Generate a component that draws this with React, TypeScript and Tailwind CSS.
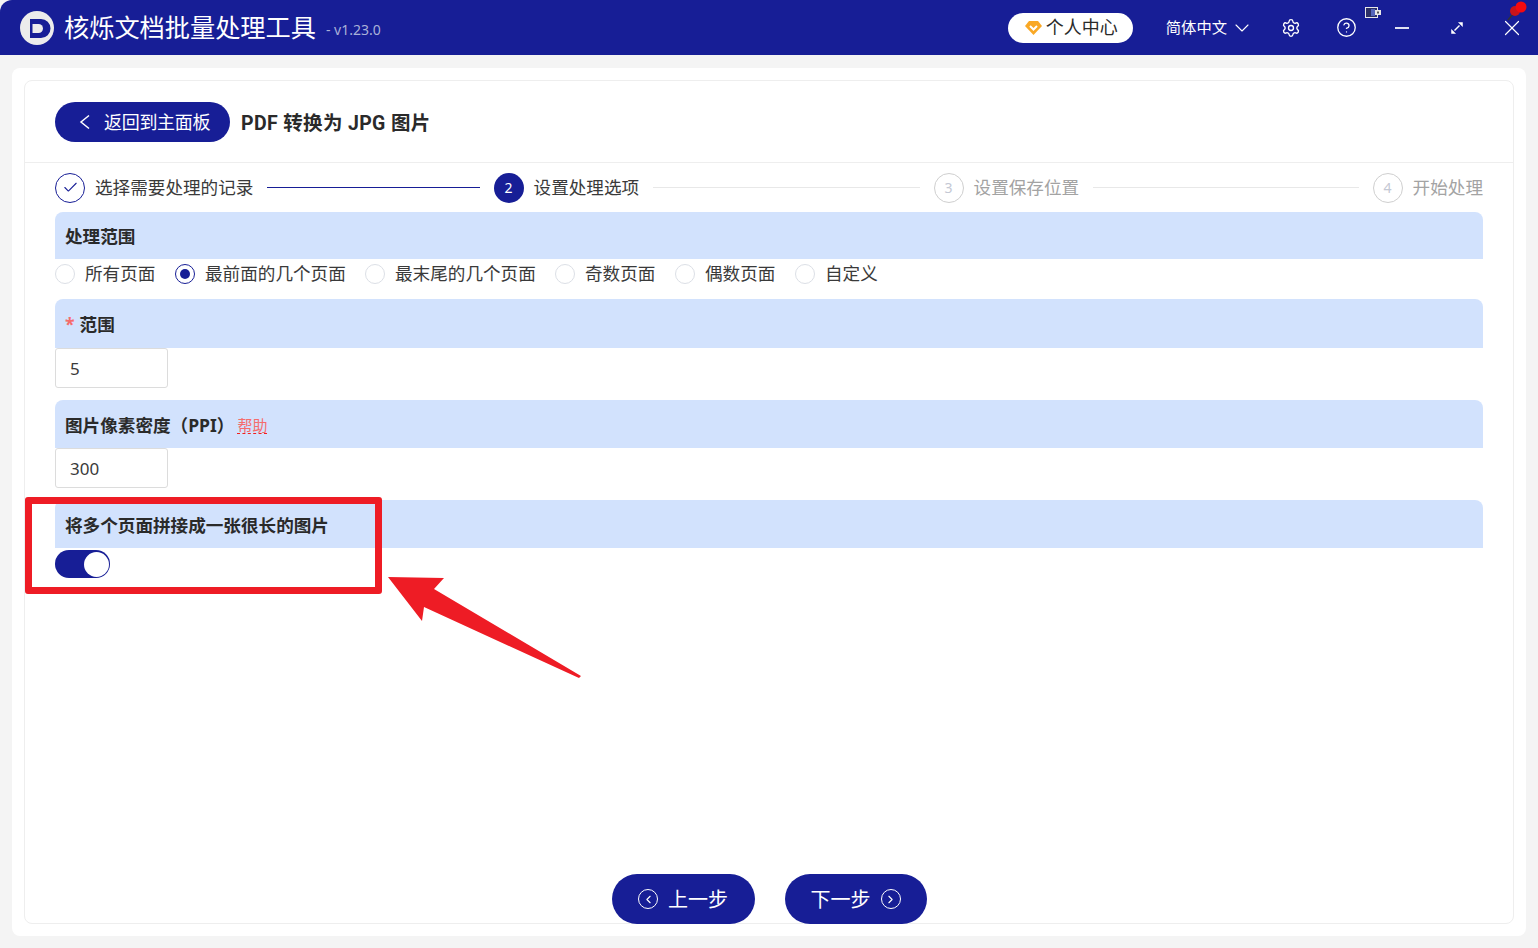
import { Check, ChevronDown, ChevronLeft, ChevronRight, CircleHelp, Settings, X } from "lucide-react";

const font = "font-['Noto_Sans','Noto_Sans_CJK_SC',sans-serif]";

function SectionHeader({ children, h }: { children: React.ReactNode; h: string }) {
  return (
    <div className={`${h} flex items-center rounded-t-lg bg-[#d2e2fd] px-2.5 pt-0.5 text-[17.6px] font-bold text-[#2a2a2a]`}>
      {children}
    </div>
  );
}

function Radio({ label, checked, width }: { label: string; checked?: boolean; width: string }) {
  return (
    <div className={`${width} flex items-center`}>
      <span
        className={`flex h-5 w-5 shrink-0 items-center justify-center rounded-full border ${
          checked ? "border-[#171e96]" : "border-[#dcdfe6]"
        }`}
      >
        {checked && <span className="h-2.5 w-2.5 rounded-full bg-[#171e96]" />}
      </span>
      <span className="-mt-0.5 ml-2.5 text-[17.6px] leading-5 text-[#3a3a3a]">{label}</span>
    </div>
  );
}

function Step({ n, label, state }: { n: number; label: string; state: "done" | "active" | "todo" }) {
  return (
    <div className="flex shrink-0 items-center">
      {state === "done" && (
        <span className="flex h-[30px] w-[30px] items-center justify-center rounded-full border border-[#171e96] text-[#171e96]">
          <Check size={17} strokeWidth={1.5} />
        </span>
      )}
      {state === "active" && (
        <span className="flex h-[30px] w-[30px] items-center justify-center rounded-full bg-[#171e96] text-sm text-white">
          {n}
        </span>
      )}
      {state === "todo" && (
        <span className="flex h-[30px] w-[30px] items-center justify-center rounded-full border border-[#cfcfcf] text-sm text-[#c4c8d4]">
          {n}
        </span>
      )}
      <span className={`ml-2.5 text-[17.6px] ${state === "todo" ? "text-[#a3a3a3]" : "text-[#3a3a3a]"}`}>{label}</span>
    </div>
  );
}

function NumberBox({ value }: { value: string }) {
  return (
    <div className="flex h-10 w-[113px] items-center rounded-[3px] border border-[#dcdcdc] bg-white pl-[14px] pt-0.5 text-[17px] text-[#3a3a3a]">
      {value}
    </div>
  );
}

export default function App() {
  return (
    <div className={`${font} relative flex h-[948px] w-[1538px] flex-col overflow-hidden bg-[#f4f4f4]`}>
      {/* title bar */}
      <header className="flex h-[55px] shrink-0 items-center rounded-tl-xl bg-[#171e96] text-white">
        <svg width="34" height="34" viewBox="0 0 34 34" className="ml-5">
          <circle cx="17" cy="17" r="17" fill="#ececec" />
          <path d="M10 8h11a9.5 9.5 0 0 1 0 19H10z" fill="#171e96" />
          <path d="M12.5 13h6a4.5 4.5 0 0 1 0 9h-6z" fill="#ececec" />
        </svg>
        <span className="ml-[10px] text-[25.2px] leading-none">核烁文档批量处理工具</span>
        <span className="ml-[10px] mt-1 text-[14px] text-[#a9b1d8]">- v1.23.0</span>
        <div className="ml-auto flex items-center">
          <div className="flex h-[30px] w-[125px] items-center justify-center rounded-full bg-white pl-0.5 text-[18px] text-[#2a2a2a]">
            <svg width="17" height="14" viewBox="0 0 17 14" className="mr-1">
              <path d="M4 0h9l4 5-8.5 9L0 5z" fill="#f9a825" />
              <path d="M5 5l3.5 3.5L12 5" stroke="#fff" strokeWidth="2" fill="none" />
            </svg>
            个人中心
          </div>
          <span className="ml-[33px] text-[15.3px]">简体中文</span>
          <ChevronDown size={24} strokeWidth={1.1} className="ml-[3px]" />
          <Settings size={20} strokeWidth={1.6} className="ml-[27px]" />
          <CircleHelp size={21} strokeWidth={1.5} className="ml-[35px]" />
          <span className="ml-[38px] h-[2px] w-[14px] bg-[#dfe1f2]" />
          <svg width="14" height="14" viewBox="0 0 14 14" className="ml-[41px]" fill="none" stroke="#fff" strokeWidth="1.4">
            <path d="M4.5 9.5l5-5" />
            <path d="M8.5 1.5h4v4z" fill="#fff" strokeWidth="0.5" />
            <path d="M1.5 8.5v4h4z" fill="#fff" strokeWidth="0.5" />
          </svg>
          <X size={26} strokeWidth={1.1} className="ml-[35px] mr-[13px]" />
        </div>
      </header>

      {/* tray icons over the title bar */}
      <svg width="16" height="12" viewBox="0 0 16 12" className="absolute left-[1365px] top-[7px]">
        <rect x="0.5" y="0.5" width="12" height="10" fill="#2b2f66" stroke="#e8e8e8" />
        <rect x="6" y="2" width="4" height="7" fill="#5566bb" />
        <rect x="10" y="3" width="6" height="5" fill="#e8e8e8" />
        <rect x="12" y="4.5" width="2" height="2" fill="#555" />
      </svg>
      <svg width="22" height="22" viewBox="0 0 22 22" className="absolute left-[1507px] top-0">
        <path d="M1 20l5-6" stroke="#333" strokeWidth="1.5" />
        <circle cx="8" cy="11" r="5" fill="#c8141a" />
        <circle cx="14" cy="7" r="5.5" fill="#f50a10" />
      </svg>

      <main className="mx-3 mb-3 mt-[13px] flex-1 rounded-t-lg rounded-b-lg bg-white p-3">
        <div className="flex h-[844px] flex-col rounded-lg border border-[#eeeeee]">
          <div className="flex h-[82px] shrink-0 items-center border-b border-[#eeeeee] pl-[30px]">
            <div className="flex h-10 w-[175px] items-center rounded-full bg-[#171e96] pl-6 pt-0.5 text-[18px] text-white">
              <svg width="12" height="16" viewBox="0 0 12 16" fill="none" stroke="#fff" strokeWidth="1.5" className="-mt-0.5">
                <path d="M10 1.5L2 8l8 6.5" />
              </svg>
              <span className="ml-[13px] tracking-[-0.3px]">返回到主面板</span>
            </div>
            <span className="ml-[11px] pt-1 font-['Roboto','Noto_Sans_CJK_SC',sans-serif] text-[19.5px] font-bold tracking-[0.35px] text-[#2a2a2a]">
              PDF 转换为 JPG 图片
            </span>
          </div>

          <div className="flex flex-1 flex-col px-[30px]">
            <div className="flex h-[49px] shrink-0 items-center">
              <Step n={1} label="选择需要处理的记录" state="done" />
              <span className="mx-[14px] h-px flex-[211] bg-[#171e96]" />
              <Step n={2} label="设置处理选项" state="active" />
              <span className="mx-[14px] h-px flex-[265] bg-[#e8e8e8]" />
              <Step n={3} label="设置保存位置" state="todo" />
              <span className="mx-[14px] h-px flex-[264] bg-[#e8e8e8]" />
              <Step n={4} label="开始处理" state="todo" />
            </div>

            <SectionHeader h="h-[47px]">处理范围</SectionHeader>
            <div className="mt-[5px] flex h-5 items-center">
              <Radio label="所有页面" width="w-[120px]" />
              <Radio label="最前面的几个页面" checked width="w-[190px]" />
              <Radio label="最末尾的几个页面" width="w-[190px]" />
              <Radio label="奇数页面" width="w-[120px]" />
              <Radio label="偶数页面" width="w-[120px]" />
              <Radio label="自定义" width="w-[120px]" />
            </div>

            <div className="mt-[15px]">
              <SectionHeader h="h-[49px]">
                <span className="mr-[5px] text-[#f56c6c]">*</span>范围
              </SectionHeader>
              <NumberBox value="5" />
            </div>

            <div className="mt-3">
              <SectionHeader h="h-12">
                图片像素密度（PPI）
                <span className="ml-[3px] border-b border-dashed border-[#f02020] text-[15px] font-normal leading-4 text-[#f56c6c]">
                  帮助
                </span>
              </SectionHeader>
              <NumberBox value="300" />
            </div>

            <div className="mt-3">
              <SectionHeader h="h-12">将多个页面拼接成一张很长的图片</SectionHeader>
              <div className="mt-0.5 flex h-7 w-[55px] items-center justify-end rounded-full bg-[#171e96] pr-[1px]">
                <span className="h-[25px] w-[25px] rounded-full bg-white" />
              </div>
            </div>

            <div className="-mb-px mt-auto flex justify-center gap-[30px]">
              <div className="flex h-[50px] w-[143px] items-center justify-center rounded-full bg-[#171e96] pt-0.5 text-[20px] text-white">
                <span className="-mt-0.5 mr-[10px] flex h-5 w-5 items-center justify-center rounded-full border-[1.5px] border-white">
                  <ChevronLeft size={13} strokeWidth={2} />
                </span>
                上一步
              </div>
              <div className="flex h-[50px] w-[142px] items-center justify-center rounded-full bg-[#171e96] pt-0.5 text-[20px] text-white">
                下一步
                <span className="-mt-0.5 ml-[10px] flex h-5 w-5 items-center justify-center rounded-full border-[1.5px] border-white">
                  <ChevronRight size={13} strokeWidth={2} />
                </span>
              </div>
            </div>
          </div>
        </div>
      </main>

      {/* red annotation drawn over the page */}
      <div className="absolute left-[25px] top-[497px] h-[97px] w-[357px] rounded-[3px] border-[7px] border-[#ee1c25]" />
      <svg width="200" height="110" viewBox="0 0 200 110" className="absolute left-[385px] top-[572px]">
        <path d="M3 5 L59 6 L49 17 L196 104 L194 106 L39 35 L37 49 Z" fill="#ee1c25" />
      </svg>
    </div>
  );
}
